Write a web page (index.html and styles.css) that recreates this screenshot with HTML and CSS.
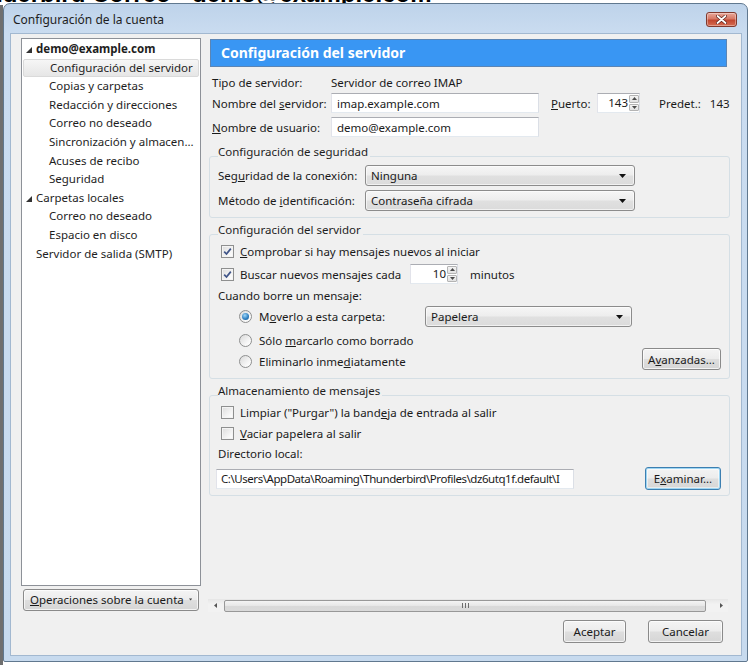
FILE: index.html
```html
<!DOCTYPE html>
<html lang="es">
<head>
<meta charset="utf-8">
<title>Configuración de la cuenta</title>
<link rel="stylesheet" href="styles.css">
</head>
<body>
<div class="desktop">
  <div class="behind">Thunderbird Correo - demo@example.com</div>
  <div class="behind-edge"></div>
  <div class="dialog">
    <div class="titlebar">
      <span class="title">Configuración de la cuenta</span>
      <span class="close"><svg width="11" height="9" viewBox="0 0 11 9"><path d="M1.5 1 L9.5 8 M9.5 1 L1.5 8" stroke="#5a1d14" stroke-width="3.2" stroke-linecap="round"/><path d="M1.5 1 L9.5 8 M9.5 1 L1.5 8" stroke="#ffffff" stroke-width="1.8" stroke-linecap="round"/></svg></span>
    </div>
    <div class="client">
      <div class="main">
        <div class="sidebar">
          <div class="tree">
            <div class="row top bold"><svg class="twisty" width="6" height="6" viewBox="0 0 6 6"><polygon points="6,0 6,6 0,6" fill="#333"/></svg><span>demo@example.com</span></div>
            <div class="row child selected">Configuración del servidor</div>
            <div class="row child">Copias y carpetas</div>
            <div class="row child">Redacción y direcciones</div>
            <div class="row child">Correo no deseado</div>
            <div class="row child">Sincronización y almacen...</div>
            <div class="row child">Acuses de recibo</div>
            <div class="row child">Seguridad</div>
            <div class="row top"><svg class="twisty" width="6" height="6" viewBox="0 0 6 6"><polygon points="6,0 6,6 0,6" fill="#333"/></svg><span>Carpetas locales</span></div>
            <div class="row child">Correo no deseado</div>
            <div class="row child">Espacio en disco</div>
            <div class="row leaf">Servidor de salida (SMTP)</div>
          </div>
          <div class="btn opbtn"><span><u>O</u>peraciones sobre la cuenta</span><svg width="5" height="3" viewBox="0 0 5 3"><polygon points="0,0 5,0 2.5,3" fill="#444"/></svg></div>
        </div>
        <div class="content">
          <div class="pane">
            <div class="header">Configuración del servidor</div>
            <div class="basic">
              <div class="frow r1"><span class="lbl">Tipo de servidor:</span><span>Servidor de correo IMAP</span></div>
              <div class="frow r2">
                <span class="lbl">Nombre del <u>s</u>ervidor:</span>
                <span class="tb host">imap.example.com</span>
                <span class="plbl"><u>P</u>uerto:</span>
                <span class="spin port"><span class="val">143</span><span class="arrows"><span class="ab"><svg width="5" height="3" viewBox="0 0 5 3"><polygon points="2.5,0 5,3 0,3" fill="#4a4a4a"/></svg></span><span class="ab"><svg width="5" height="3" viewBox="0 0 5 3"><polygon points="0,0 5,0 2.5,3" fill="#4a4a4a"/></svg></span></span></span>
                <span class="pdef">Predet.:</span>
                <span class="pval">143</span>
              </div>
              <div class="frow r3"><span class="lbl"><u>N</u>ombre de usuario:</span><span class="tb host">demo@example.com</span></div>
            </div>

            <fieldset class="group sec">
              <legend>Configuración de seguridad</legend>
              <div class="srow"><span class="slbl">Seg<u>u</u>ridad de la conexión:</span><span class="sel wide"><span>Ninguna</span><svg width="7" height="4" viewBox="0 0 7 4"><polygon points="0,0 7,0 3.5,4" fill="#111"/></svg></span></div>
              <div class="srow"><span class="slbl">Método de <u>i</u>dentificación:</span><span class="sel wide"><span>Contraseña cifrada</span><svg width="7" height="4" viewBox="0 0 7 4"><polygon points="0,0 7,0 3.5,4" fill="#111"/></svg></span></div>
            </fieldset>

            <fieldset class="group srv">
              <legend>Configuración del servidor</legend>
              <div class="crow c1"><span class="cb"><svg width="11" height="11" viewBox="0 0 11 11"><path d="M2.2 5.6 L4.5 8 L8.8 2.6" fill="none" stroke="#3f5488" stroke-width="1.7"/></svg></span><span><u>C</u>omprobar si hay mensajes nuevos al iniciar</span></div>
              <div class="crow c2"><span class="cb"><svg width="11" height="11" viewBox="0 0 11 11"><path d="M2.2 5.6 L4.5 8 L8.8 2.6" fill="none" stroke="#3f5488" stroke-width="1.7"/></svg></span><span class="cblbl">Buscar nuevos mensajes cada</span><span class="spin mins"><span class="val">10</span><span class="arrows"><span class="ab"><svg width="5" height="3" viewBox="0 0 5 3"><polygon points="2.5,0 5,3 0,3" fill="#4a4a4a"/></svg></span><span class="ab"><svg width="5" height="3" viewBox="0 0 5 3"><polygon points="0,0 5,0 2.5,3" fill="#4a4a4a"/></svg></span></span></span><span class="minutos">minutos</span></div>
              <div class="plain cuando">Cuando borre un mensaje:</div>
              <div class="rrow rr1"><span class="radio on"></span><span class="rlbl">M<u>o</u>verlo a esta carpeta:</span><span class="sel papel"><span>Papelera</span><svg width="7" height="4" viewBox="0 0 7 4"><polygon points="0,0 7,0 3.5,4" fill="#111"/></svg></span></div>
              <div class="lower">
                <div class="radios">
                  <div class="rrow"><span class="radio"></span><span>Sólo <u>m</u>arcarlo como borrado</span></div>
                  <div class="rrow"><span class="radio"></span><span>Eliminarlo inme<u>d</u>iatamente</span></div>
                </div>
                <div class="btn avz">A<u>v</u>anzadas...</div>
              </div>
            </fieldset>

            <fieldset class="group sto">
              <legend>Almacenamiento de mensajes</legend>
              <div class="crow s1"><span class="cb"></span><span>Limpiar ("Purgar") la band<u>e</u>ja de entrada al salir</span></div>
              <div class="crow s2"><span class="cb"></span><span><u>V</u>aciar papelera al salir</span></div>
              <div class="plain dir">Directorio local:</div>
              <div class="dirrow"><span class="tb path">C:\Users\AppData\Roaming\Thunderbird\Profiles\dz6utq1f.default\I</span><span class="btn exam">E<u>x</u>aminar...</span></div>
            </fieldset>
          </div>
          <div class="hscroll">
            <svg class="sarrow" width="3" height="5" viewBox="0 0 3 5"><polygon points="3,0 3,5 0,2.5" fill="#555"/></svg>
            <div class="thumb"><span class="grip"></span></div>
            <svg class="sarrow" width="3" height="5" viewBox="0 0 3 5"><polygon points="0,0 3,2.5 0,5" fill="#555"/></svg>
          </div>
        </div>
      </div>
      <div class="footer">
        <div class="btn fbtn ok">Aceptar</div>
        <div class="btn fbtn cancel">Cancelar</div>
      </div>
    </div>
  </div>
</div>
</body>
</html>
```
FILE: styles.css
```css
* { box-sizing: border-box; }
html, body { margin: 0; padding: 0; }
body {
  width: 750px; height: 665px; overflow: hidden; background: #ffffff;
  font-family: "Noto Sans", "Open Sans", "DejaVu Sans", sans-serif;
  font-size: 11.5px; color: #1a1a1a;
}
u { text-decoration-thickness: 1px; text-underline-offset: 1px; }
.desktop { position: relative; width: 750px; height: 665px; overflow: hidden; }
.behind {
  position: absolute; left: -56px; top: -18px; white-space: nowrap;
  font: bold 24px/24px "Liberation Sans", Arial, sans-serif; color: #000;
}
.behind-edge { position: absolute; left: 0; top: 5px; width: 3px; height: 660px; background: #6f6f6f; }

.dialog {
  position: absolute; left: 3px; top: 3px; width: 745px; height: 659px;
  display: flex; flex-direction: column;
  border: 1px solid #60788f; border-radius: 7px 7px 2px 2px;
  background: linear-gradient(#bed3ea, #cadcf0 30px, #c7daee);
}
.titlebar {
  height: 29px; display: flex; align-items: center; justify-content: space-between;
  padding: 2px 10px 0 9px;
}
.title { font-size: 12px; color: #1e1e1e; }
.close {
  width: 31px; height: 15px; border: 1px solid #80392d; border-radius: 3px;
  background: linear-gradient(#e9a89a, #d77865 45%, #c1462f 55%, #d66d52);
  display: flex; align-items: center; justify-content: center;
  box-shadow: inset 0 0 0 1px rgba(255,255,255,0.35);
}
.client {
  flex: 1; margin: 0 5px 5px 6px; border: 1px solid #a2b8d0; background: #f0f0f0;
  display: flex; flex-direction: column; padding: 4px 10px 12px 10px;
}
.main { flex: 1; display: flex; gap: 7px; min-height: 0; }

/* sidebar */
.sidebar { width: 180px; display: flex; flex-direction: column; }
.tree { flex: 1; background: #fff; border: 1px solid #8d9198; padding-top: 1px; }
.row { height: 18.6px; line-height: 18.6px; white-space: nowrap; color: #1e1e1e; display: flex; align-items: center; }
.row.bold { font-weight: bold; }
.row.top { padding-left: 4px; }
.twisty { margin-right: 4px; margin-top: 1px; flex: none; }
.row.child { padding-left: 27px; }
.row.leaf { padding-left: 14px; }
.row.selected {
  margin: 0 1px; padding-left: 26px;
  border: 1px solid #dadada; border-radius: 2px;
  background: linear-gradient(#f6f6f6, #e6e6e6);
}
.btn {
  display: flex; align-items: center; justify-content: center;
  border: 1px solid #8a8a8a; border-radius: 3px; color: #1a1a1a;
  background: linear-gradient(#f4f4f4, #ececec 48%, #dedede 52%, #d6d6d6);
  box-shadow: inset 0 0 0 1px rgba(255,255,255,0.7);
  white-space: nowrap;
}
.opbtn { height: 22px; margin: 3px 2px 1px 2px; justify-content: flex-start; gap: 5px; padding: 0 6px 2px 6px; }
.opbtn svg { margin-top: 1px; }

/* content */
.content { flex: 1; display: flex; flex-direction: column; min-width: 0; }
.pane { flex: 1; overflow: hidden; }
.header {
  margin: 1px 4px 0 2px; height: 28px; padding-left: 10px;
  border: 1px solid #5b85b5; background: #3996f3; color: #fff;
  font-weight: bold; font-size: 14px; line-height: 25px;
}
.basic { padding-left: 4px; }
.frow { display: flex; align-items: center; white-space: nowrap; }
.r1 { margin-top: 6px; height: 18px; }
.r2 { margin-top: 2px; height: 20px; }
.r3 { margin-top: 4px; height: 20px; }
.lbl { width: 119px; flex: none; }
.tb {
  display: flex; align-items: center; height: 20px; background: #fff;
  border: 1px solid; border-color: #abadb3 #dbdfe6 #e3e9ef #e2e3ea;
  padding-left: 5px; white-space: nowrap; overflow: hidden;
}
.host { width: 208px; }
.plbl { margin-left: 12px; width: 46px; }
.spin {
  display: flex; height: 20px; background: #fff;
  border: 1px solid; border-color: #abadb3 #dbdfe6 #e3e9ef #e2e3ea;
}
.spin .val { flex: 1; text-align: right; line-height: 18px; padding-right: 1px; }
.arrows { width: 10px; display: flex; flex-direction: column; gap: 1px; padding: 1px 0; }
.ab {
  flex: 1; display: flex; align-items: center; justify-content: center;
  border: 1px solid #b4b4b4; border-radius: 1px; background: linear-gradient(#f3f3f3, #e2e2e2);
}
.port { width: 43px; }
.pdef { margin-left: 19px; }
.pval { margin-left: 9px; }

/* groups */
.group {
  margin: 0 1px; border: 1px solid #d5dfe5; border-radius: 3px;
  padding: 0 8px 6px 8px; min-width: 0;
}
.group legend { padding: 0 2px 0 0; line-height: 16px; color: #1e1e1e; transform: translateY(-4px); }
.sec { margin-top: 11px; padding-top: 1px; }
.srow { display: flex; align-items: center; height: 21px; white-space: nowrap; }
.srow + .srow { margin-top: 4px; }
.slbl { width: 147px; flex: none; }
.sel {
  display: flex; align-items: center; justify-content: space-between; height: 21px;
  border: 1px solid #8c8c8c; border-radius: 3px; padding: 0 8px 0 5px;
  background: linear-gradient(#f6f6f6, #ededed 48%, #e0e0e0 52%, #dbdbdb);
  box-shadow: inset 0 0 0 1px rgba(255,255,255,0.6);
}
.sel.wide { width: 270px; }
.srv { margin-top: 8px; padding-top: 0; padding-bottom: 7px; }
.crow { display: flex; align-items: center; white-space: nowrap; height: 19px; }
.cb {
  width: 13px; height: 13px; flex: none; margin: 0 6px 0 3px;
  border: 1px solid #8e8f8f; display: flex; align-items: center; justify-content: center;
  background: linear-gradient(135deg, #dcdcdc, #f7f7f7 70%, #ffffff);
  box-shadow: inset 0 0 0 1px #f4f4f4;
}
.c2 { margin-top: 3px; height: 20px; }
.cblbl { width: 170px; flex: none; }
.mins { width: 48px; }
.minutos { margin-left: 12px; }
.plain { height: 18px; line-height: 18px; white-space: nowrap; }
.cuando { margin-top: 3px; }
.rrow { display: flex; align-items: center; height: 20px; white-space: nowrap; padding-left: 21px; }
.rr1 { margin-top: 1px; height: 21px; }
.radio {
  width: 13px; height: 13px; border-radius: 50%; flex: none; margin-right: 7px;
  border: 1px solid #8e8f8f; background: linear-gradient(135deg, #d9d9d9, #f8f8f8 70%, #fff);
  display: flex; align-items: center; justify-content: center;
}
.radio.on::after {
  content: ""; width: 7px; height: 7px; border-radius: 50%;
  background: radial-gradient(circle at 40% 35%, #9fd8fb, #2a7bbd 60%, #1d5c8e);
}
.rlbl { width: 166px; flex: none; }
.sel.papel { width: 207px; }
.lower { display: flex; justify-content: space-between; margin-top: 3px; }
.radios { display: flex; flex-direction: column; gap: 1px; }
.avz { width: 79px; height: 22px; align-self: flex-end; margin-bottom: 1px; }
.sto { margin-top: 8px; padding-top: 0; padding-bottom: 5px; }
.s2 { margin-top: 2px; }
.dir { margin-top: 2px; }
.dirrow { display: flex; align-items: center; justify-content: space-between; height: 23px; margin-top: 4px; margin-left: -2px; }
.path { width: 358px; padding-left: 4px; letter-spacing: -0.45px; }
.exam {
  width: 76px; height: 23px; border-color: #3c7fb1;
  box-shadow: inset 0 0 0 1px #9fd6f3, inset 0 0 0 2px rgba(255,255,255,0.5);
}

/* scrollbar */
.hscroll {
  height: 13px; margin-right: 3px; display: flex; align-items: center; gap: 0;
  background: linear-gradient(#e6e6e6, #f2f2f2 40%, #f2f2f2); padding: 0 5px 0 6px;
}
.sarrow { flex: none; }
.thumb {
  flex: 1; height: 12px; margin: 0 14px 0 7px; border: 1px solid #989898; border-radius: 2px;
  background: linear-gradient(#f4f4f4, #e6e6e6 50%, #d9d9d9 51%, #dadada);
  display: flex; align-items: center; justify-content: center;
}
.grip {
  width: 7px; height: 5px;
  background: repeating-linear-gradient(90deg, #6c6c6c 0 1px, transparent 1px 3px);
}

/* footer */
.footer { display: flex; justify-content: flex-end; gap: 22px; margin-top: 8px; padding-right: 8px; }
.fbtn { height: 23px; }
.ok { width: 63px; }
.cancel { width: 75px; }
```
